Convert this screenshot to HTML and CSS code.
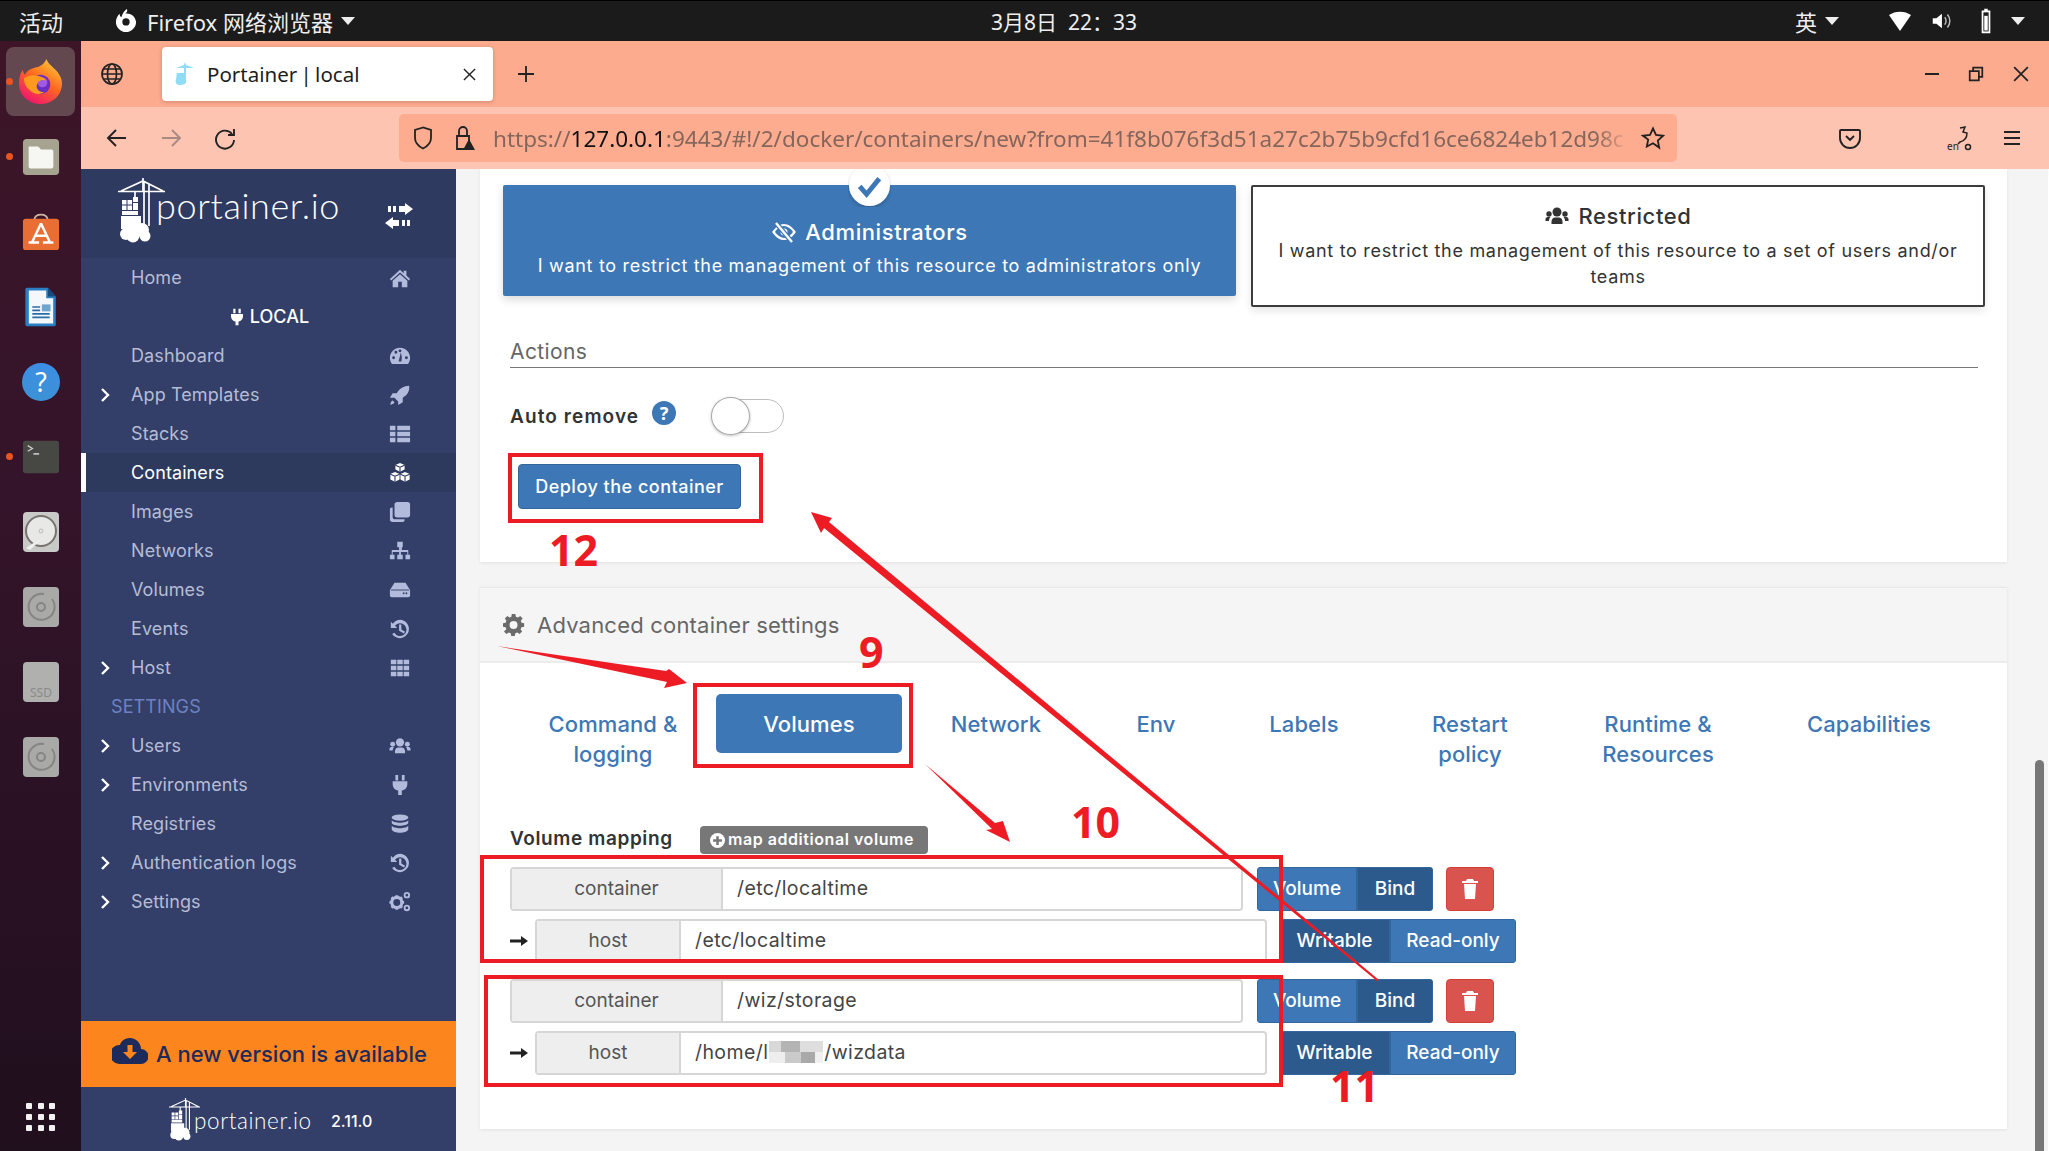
FILE: index.html
```html
<!DOCTYPE html>
<html lang="zh">
<head>
<meta charset="utf-8">
<title>Portainer | local</title>
<link rel="stylesheet" href="styles.css">
</head>
<body>
<svg class="defs" width="0" height="0" aria-hidden="true">
  <defs>
    <symbol id="i-home" viewBox="0 0 24 24"><path d="M12 3 1 13l1.400 1.600L12 6l9.600 8.600L23 13l-4-3.600V4h-3v2.700z"/><path d="M12 8 4 15v7h6v-6h4v6h6v-7z"/></symbol>
    <symbol id="i-plug" viewBox="0 0 24 24"><path d="M7 1h3v6H7zM14 1h3v6h-3zM4 8h16v3c0 4-2.500 6.500-6 7v5h-4v-5c-3.500-.5-6-3-6-7z"/></symbol>
    <symbol id="i-dash" viewBox="0 0 24 24"><path fill-rule="evenodd" d="M12 3C5.900 3 1 7.900 1 14c0 2.500.8 4.900 2.200 6.800h17.600C22.200 18.900 23 16.500 23 14c0-6.100-4.900-11-11-11zM5 15.500a1.600 1.600 0 1 1 0-3.200 1.600 1.600 0 0 1 0 3.200zm2.500-6a1.600 1.600 0 1 1 0-3.200 1.600 1.600 0 0 1 0 3.200zM12 8a1.600 1.600 0 1 1 0-3.200A1.600 1.600 0 0 1 12 8zm1.500 10h-3l1-4 1.500-6 1 6zM19 15.500a1.600 1.600 0 1 1 0-3.200 1.600 1.600 0 0 1 0 3.200z"/></symbol>
    <symbol id="i-rocket" viewBox="0 0 24 24"><path d="M22 2c-6 .3-10.500 3-13.500 8H4l-3 5h5l4 4v4l5-3v-5c5-3 7.700-7 7-13zM4 18c-2 1-2.500 3-2.500 4.500C3 22.500 5 22 6 20z"/></symbol>
    <symbol id="i-list" viewBox="0 0 24 24"><path d="M1 3h6v5H1zM9 3h14v5H9zM1 9.500h6v5H1zM9 9.500h14v5H9zM1 16h6v5H1zM9 16h14v5H9z"/></symbol>
    <symbol id="i-cubes" viewBox="0 0 24 24"><path d="m12 1 5 2.200v5L12 10.500 7 8.200v-5zM6.500 11l5 2.200v6l-5 2.300-5-2.300v-6zM17.500 11l5 2.200v6l-5 2.300-5-2.300v-6z"/><path fill="none" stroke="#2d3a5e" stroke-width="1.200" d="M7 3.500l5 2.200 5-2.200M12 5.700v4.800M1.500 13.300l5 2.200 5-2.200M6.500 15.500v6M12.500 13.300l5 2.200 5-2.200M17.500 15.500v6"/></symbol>
    <symbol id="i-clone" viewBox="0 0 24 24"><path d="M9 1h11a3 3 0 0 1 3 3v11a3 3 0 0 1-3 3H9a3 3 0 0 1-3-3V4a3 3 0 0 1 3-3z"/><path d="M4 7v11a2 2 0 0 0 2 2h11v1a2 2 0 0 1-2 2H4a3 3 0 0 1-3-3V9a2 2 0 0 1 2-2z"/></symbol>
    <symbol id="i-site" viewBox="0 0 24 24"><path d="M9 2h6v6h-1v3h7v5h2v5h-5v-5h2v-3h-7v3h2v5H9v-5h2v-3H4v3h2v5H1v-5h2v-5h8V8H9z"/></symbol>
    <symbol id="i-hdd" viewBox="0 0 24 24"><path fill-rule="evenodd" d="M6 4h12l5 8v6a2 2 0 0 1-2 2H3a2 2 0 0 1-2-2v-6zM17 15.500a1 1 0 1 0 0 .1zm3 0a1 1 0 1 0 0 .1z"/><path d="M2 12h20" stroke="#333f68" stroke-width="1"/></symbol>
    <symbol id="i-hist" viewBox="0 0 24 24"><path d="M12.500 2A10 10 0 0 0 4.300 6.300L2 4v7h7L6.500 8.500a7 7 0 1 1-.6 7.500l-2.500 1.500A10 10 0 1 0 12.500 2z"/><path d="M11 7h2.500v5.500l4 2.400-1.200 2L11 14z"/></symbol>
    <symbol id="i-grid" viewBox="0 0 24 24"><path d="M2 3h6v5H2zM9 3h6v5H9zM16 3h6v5h-6zM2 9.500h6v5H2zM9 9.500h6v5H9zM16 9.500h6v5h-6zM2 16h6v5H2zM9 16h6v5H9zM16 16h6v5h-6z"/></symbol>
    <symbol id="i-users" viewBox="0 0 24 24"><circle cx="12" cy="8" r="4.500"/><circle cx="4" cy="10" r="2.700"/><circle cx="20" cy="10" r="2.700"/><path d="M6.500 20v-2.500C6.500 15 8.500 13.500 10 13.500h4c1.500 0 3.500 1.500 3.500 4V20zM.5 17v-2c0-1 1-2 2-2h3c-1 1-1.500 2.500-1.500 4zM23.500 17v-2c0-1-1-2-2-2h-3c1 1 1.500 2.500 1.500 4z"/></symbol>
    <symbol id="i-db" viewBox="0 0 24 24"><ellipse cx="12" cy="5" rx="9" ry="3.500"/><path d="M3 7.500c1 2 5 3 9 3s8-1 9-3v3.500c-1 2-5 3-9 3s-8-1-9-3zM3 13.500c1 2 5 3 9 3s8-1 9-3V18c-1 2.500-5 3.500-9 3.500S4 20.500 3 18z"/></symbol>
    <symbol id="i-cogs" viewBox="0 0 24 24"><circle cx="8.500" cy="12.500" r="5.500" fill="none" stroke="#b3bbdd" stroke-width="3.400"/><path stroke="#b3bbdd" stroke-width="3" d="M8.500 4.500v3M8.500 17.500v3M.5 12.500h3M13.500 12.500h3M2.800 6.800l2.200 2.200M12 16l2.200 2.200M2.800 18.200 5 16M12 9l2.200-2.200"/><path fill-rule="evenodd" d="M19.500 1a3.500 3.500 0 1 1 0 7 3.500 3.500 0 0 1 0-7zm0 2a1.500 1.500 0 1 0 0 3 1.500 1.500 0 0 0 0-3zM19.500 15a3.500 3.500 0 1 1 0 7 3.500 3.500 0 0 1 0-7zm0 2a1.500 1.500 0 1 0 0 3 1.500 1.500 0 0 0 0-3z"/></symbol>
    <symbol id="i-chev" viewBox="0 0 12 16"><path d="M3 2l6 6-6 6" fill="none" stroke="#fff" stroke-width="2.400"/></symbol>
    <symbol id="i-logo" viewBox="0 0 47 65">
      <path d="M25 0v13M3 13 25 3l20 10M0 13.500h47M26 3v46M31 6v42M17 14v6" stroke="#fff" stroke-width="1.700" fill="none"/>
      <path d="M15 19h5v5h-5zM4 22h4.500v4.500H4zM9.500 22H14v4.500H9.500zM4 27.500h4.500V32H4zM9.500 27.500H14V32H9.500zM15 25h5v7h-5zM4 33h16v4H4z" fill="#fff"/>
      <path d="M3 38h20v8c0 3-5 5-10 5H3z" fill="#fff"/>
      <circle cx="8" cy="56" r="6" fill="#fff"/><circle cx="15" cy="50" r="7" fill="#fff"/><circle cx="24" cy="52" r="7" fill="#fff"/><circle cx="27" cy="58" r="5.500" fill="#fff"/><circle cx="15" cy="58" r="6.500" fill="#fff"/>
    </symbol>
  </defs>
</svg>

<header class="topbar">
  <span class="top-activities">活动</span>
  <span class="top-app">
    <svg class="top-ff" viewBox="0 0 24 26"><path fill="#fff" fill-rule="evenodd" d="M13 0c1 2 0 4-2 5 5-1 11 2 12 9 0 6-5 11-11 11S1 20 1 14c0-4 2-7 4-9 0 2 1 3 2 4 1-4 3-7 6-9zm-1 10a4 4 0 1 0 0 8 4 4 0 0 0 0-8z"/></svg>
    <span>Firefox 网络浏览器</span>
    <i class="caret"></i>
  </span>
  <span class="top-clock">3月8日&nbsp; 22：33</span>
  <span class="top-tray">
    <span class="tray-ime">英</span><i class="caret"></i>
    <svg class="tray-wifi" viewBox="0 0 24 24"><path fill="#fff" d="M1 6c6-4.500 16-4.500 22 0L12 22z"/></svg>
    <svg class="tray-vol" viewBox="0 0 24 24"><path fill="#fff" d="M3 9h4l6-5v16l-6-5H3z"/><path d="M16 8c2 2 2 6 0 8M19 5c3.500 4 3.500 10 0 14" stroke="#bbb" stroke-width="1.600" fill="none"/></svg>
    <svg class="tray-bat" viewBox="0 0 16 30"><path fill="#fff" d="M6 1h4v2h3v26H3V3h3z"/><path fill="#1a1a1a" d="M5 5h6v22H5z"/><path fill="#fff" d="M6 9h4v17H6z"/></svg>
    <svg class="tray-caret" viewBox="0 0 14 8"><path fill="#eee" d="M0 0h14L7 8z"/></svg>
  </span>
</header>

<div class="desktop">
  <nav class="dock">
    <div class="dock-item is-active is-running">
      <svg class="dock-ff" viewBox="0 0 44 46">
        <defs>
          <linearGradient id="ffg" x1="0.900" y1="0" x2="0.300" y2="1"><stop offset="0" stop-color="#ffd53a"/><stop offset=".5" stop-color="#ff6a1f"/><stop offset="1" stop-color="#f0146e"/></linearGradient>
        </defs>
        <path fill="url(#ffg)" d="M28 0c1 3 3 5 6 8 6 5 10 11 10 17 0 12-10 21-22 21S0 37 0 25c0-5 1-10 4-14 0 2 1 4 2 5 2-4 6-6 10-7 6-1 10-4 12-9z"/>
        <circle cx="22" cy="26" r="10" fill="#6a2fc2"/>
        <circle cx="24" cy="24" r="5" fill="#a15ae0"/>
        <path fill="#ff9a1f" d="M5 20c4-3 9-4 14-3 4 1 7 2 9 5-3-1-6-1-8 1-1 2-3 4-1 8 1 2 4 3 7 3-5 3-11 2-15-2-4-3-6-8-6-12z"/>
      </svg>
    </div>
    <div class="dock-item is-running">
      <svg class="dock-ico" viewBox="0 0 40 40"><rect x="1" y="1" width="38" height="38" rx="4" fill="#a7a391"/><path d="M7 9h10l3 3h11a2 2 0 0 1 2 2v16a2 2 0 0 1-2 2H9a2 2 0 0 1-2-2z" fill="#f6f6f2"/></svg>
    </div>
    <div class="dock-item">
      <svg class="dock-ico" viewBox="0 0 40 40"><path d="M13 7c1-7 13-7 14 0" fill="none" stroke="#cdb6a2" stroke-width="2"/><rect x="1" y="6" width="38" height="33" rx="3" fill="#e96e34"/><path d="M20 11 11 30M20 11l9 19M14 24h12M7 31h11M22 31h11" stroke="#fff" stroke-width="2.600" fill="none"/></svg>
    </div>
    <div class="dock-item">
      <svg class="dock-ico" viewBox="0 0 40 46"><path d="M4 1h24l9 10v32a2 2 0 0 1-2 2H4a2 2 0 0 1-2-2V3a2 2 0 0 1 2-2z" fill="#2a7fc4"/><path d="M6 4h20v9h8v29H6z" fill="#f4f8fb"/><path d="M28 1l9 10h-9z" fill="#164b80"/><path d="M10 22h9v2h-9zM10 26h9v2h-9zM10 30h20v2H10zM10 34h20v2H10z" fill="#2a6ca6"/><rect x="21" y="20" width="10" height="8" fill="#6ea6cf"/></svg>
    </div>
    <div class="dock-item">
      <svg class="dock-ico" viewBox="0 0 40 40"><defs><linearGradient id="hlp" x1="0" y1="0" x2="0" y2="1"><stop offset="0" stop-color="#3c8ee4"/><stop offset="1" stop-color="#3c92d4"/></linearGradient></defs><circle cx="20" cy="20" r="20" fill="url(#hlp)"/><text x="20" y="30" text-anchor="middle" class="dock-q">?</text></svg>
    </div>
    <div class="dock-item is-running">
      <svg class="dock-ico" viewBox="0 0 40 36"><rect x="1" y="1" width="38" height="34" rx="3" fill="#474744"/><path d="M6 6l5 3-5 3" fill="none" stroke="#ccc" stroke-width="1.400"/><path d="M12 14h6v1.500h-6z" fill="#ddd"/></svg>
    </div>
    <div class="dock-item">
      <svg class="dock-ico" viewBox="0 0 36 40"><rect width="36" height="40" rx="4" fill="#c9c9c7"/><circle cx="18" cy="19" r="15" fill="#e8e8e6" stroke="#77736f" stroke-width="2"/><circle cx="18" cy="19" r="2" fill="none" stroke="#bbb"/><path d="M3 36l12-8h3L7 38z" fill="#eee"/></svg>
    </div>
    <div class="dock-item">
      <svg class="dock-ico" viewBox="0 0 36 40"><rect width="36" height="40" rx="4" fill="#a9a9a7"/><path d="M21 7a13 13 0 1 0 8 5" fill="none" stroke="#858583" stroke-width="2"/><circle cx="18" cy="20" r="4" fill="none" stroke="#858583" stroke-width="2"/></svg>
    </div>
    <div class="dock-item">
      <svg class="dock-ico" viewBox="0 0 36 40"><rect width="36" height="40" rx="4" fill="#b0b0ae"/><text x="18" y="35" text-anchor="middle" class="dock-ssd">SSD</text></svg>
    </div>
    <div class="dock-item">
      <svg class="dock-ico" viewBox="0 0 36 40"><rect width="36" height="40" rx="4" fill="#a9a9a7"/><path d="M21 7a13 13 0 1 0 8 5" fill="none" stroke="#858583" stroke-width="2"/><circle cx="18" cy="20" r="4" fill="none" stroke="#858583" stroke-width="2"/></svg>
    </div>
    <div class="dock-apps"><i></i><i></i><i></i><i></i><i></i><i></i><i></i><i></i><i></i></div>
  </nav>

  <div class="window">
    <div class="tabstrip">
      <svg class="ff-globe" viewBox="0 0 24 24"><circle cx="12" cy="12" r="10"/><ellipse cx="12" cy="12" rx="4.500" ry="10"/><path d="M2 12h20M3.500 7h17M3.500 17h17"/></svg>
      <div class="tab">
        <svg class="tab-fav" viewBox="0 0 20 24"><path fill="#8fdcf5" d="M10 0l1 3 8 3H11v14c0 2-3 3-6 3-4 0-5-3-4-6 1-2 0-4 1-6h7V6H1l8-3z"/></svg>
        <span class="tab-title">Portainer | local</span>
        <svg class="tab-close" viewBox="0 0 14 14"><path d="M1 1l12 12M13 1L1 13"/></svg>
      </div>
      <svg class="tab-new" viewBox="0 0 20 20"><path d="M10 2v16M2 10h16"/></svg>
      <div class="win-ctrls">
        <span class="win-min"></span>
        <svg class="win-max" viewBox="0 0 14 14"><path d="M1.500 4.500h8v8h-8zM4.500 4.500v-3h8v8h-3"/></svg>
        <svg class="win-x" viewBox="0 0 14 14"><path d="M1 1l12 12M13 1L1 13"/></svg>
      </div>
    </div>

    <div class="navbar">
      <svg class="nb-ico nb-back" viewBox="0 0 24 24"><path d="M21 12H3M11 4l-8 8 8 8"/></svg>
      <svg class="nb-ico nb-fwd" viewBox="0 0 24 24"><path d="M3 12h18M13 4l8 8-8 8"/></svg>
      <svg class="nb-ico nb-reload" viewBox="0 0 24 24"><path d="M19 8a9 9 0 1 0 2 6M21 3v6h-6"/></svg>
      <div class="urlbar">
        <svg class="url-shield" viewBox="0 0 20 24"><path d="M10 1.500 2 4v8c0 5 4 8.500 8 10.500 4-2 8-5.500 8-10.500V4z"/></svg>
        <svg class="url-lock" viewBox="0 0 24 26"><path d="M5 11h12v13H5zM7 11V6a4 4 0 0 1 8 0v5"/><path class="url-warn" d="M17 14l6 11H11z"/></svg>
        <span class="url-text"><span class="url-dim">https://</span><b class="url-host">127.0.0.1</b><span class="url-dim">:9443/#!/2/docker/containers/new?from=41f8b076f3d51a27c2b75b9cfd16ce6824eb12d98c</span></span>
        <svg class="url-star" viewBox="0 0 24 24"><path d="M12 2.500l3 6.500 7 .8-5.200 4.800 1.400 7L12 17.200l-6.200 3.400 1.400-7L2 9.800 9 9z"/></svg>
      </div>
      <svg class="nb-ico nb-pocket" viewBox="0 0 24 24"><path d="M3 4h18a1 1 0 0 1 1 1v7a10 10 0 0 1-20 0V5a1 1 0 0 1 1-1zM8 10l4 4 4-4"/></svg>
      <svg class="nb-ico nb-ext" viewBox="0 0 26 26"><path d="M14 3l5-1-2 5 4 1c0 5-3 8-7 9l-2 2"/><text x="1" y="25" class="nb-en">en</text><circle cx="22" cy="22" r="2.500"/></svg>
      <svg class="nb-ico nb-menu" viewBox="0 0 24 24"><path d="M4 6h16M4 12h16M4 18h16"/></svg>
    </div>

    <div class="app">
      <aside class="sidebar">
        <div class="side-head">
          <svg class="side-logo"><use href="#i-logo"/></svg>
          <span class="side-brand">portainer.io</span>
          <svg class="side-swap" viewBox="0 0 28 26"><path fill="#fff" d="M14 3h6V0l8 6-8 6V9h-6zM8 3h3v6H8zM3 3h3v6H3zM14 23H8v3l-8-6 8-6v3h6zM20 17h-3v6h3zM25 17h-3v6h3z"/></svg>
        </div>
        <ul class="side-nav">
          <li class="side-row"><span class="side-gut"></span><span class="side-lbl">Home</span><svg class="side-ico"><use href="#i-home"/></svg></li>
          <li class="side-row side-env"><svg class="env-plug"><use href="#i-plug"/></svg>LOCAL</li>
          <li class="side-row"><span class="side-gut"></span><span class="side-lbl">Dashboard</span><svg class="side-ico"><use href="#i-dash"/></svg></li>
          <li class="side-row"><span class="side-gut"><svg class="chev"><use href="#i-chev"/></svg></span><span class="side-lbl">App Templates</span><svg class="side-ico"><use href="#i-rocket"/></svg></li>
          <li class="side-row"><span class="side-gut"></span><span class="side-lbl">Stacks</span><svg class="side-ico"><use href="#i-list"/></svg></li>
          <li class="side-row is-current"><span class="side-gut"></span><span class="side-lbl">Containers</span><svg class="side-ico"><use href="#i-cubes"/></svg></li>
          <li class="side-row"><span class="side-gut"></span><span class="side-lbl">Images</span><svg class="side-ico"><use href="#i-clone"/></svg></li>
          <li class="side-row"><span class="side-gut"></span><span class="side-lbl">Networks</span><svg class="side-ico"><use href="#i-site"/></svg></li>
          <li class="side-row"><span class="side-gut"></span><span class="side-lbl">Volumes</span><svg class="side-ico"><use href="#i-hdd"/></svg></li>
          <li class="side-row"><span class="side-gut"></span><span class="side-lbl">Events</span><svg class="side-ico"><use href="#i-hist"/></svg></li>
          <li class="side-row"><span class="side-gut"><svg class="chev"><use href="#i-chev"/></svg></span><span class="side-lbl">Host</span><svg class="side-ico"><use href="#i-grid"/></svg></li>
          <li class="side-row side-title">SETTINGS</li>
          <li class="side-row"><span class="side-gut"><svg class="chev"><use href="#i-chev"/></svg></span><span class="side-lbl">Users</span><svg class="side-ico"><use href="#i-users"/></svg></li>
          <li class="side-row"><span class="side-gut"><svg class="chev"><use href="#i-chev"/></svg></span><span class="side-lbl">Environments</span><svg class="side-ico"><use href="#i-plug"/></svg></li>
          <li class="side-row"><span class="side-gut"></span><span class="side-lbl">Registries</span><svg class="side-ico"><use href="#i-db"/></svg></li>
          <li class="side-row"><span class="side-gut"><svg class="chev"><use href="#i-chev"/></svg></span><span class="side-lbl">Authentication logs</span><svg class="side-ico"><use href="#i-hist"/></svg></li>
          <li class="side-row"><span class="side-gut"><svg class="chev"><use href="#i-chev"/></svg></span><span class="side-lbl">Settings</span><svg class="side-ico"><use href="#i-cogs"/></svg></li>
        </ul>
        <div class="side-update">
          <svg class="update-ico" viewBox="0 0 36 26"><path fill="#1d2a5c" d="M29 11C29 5 24 0 18 0c-5 0-9 3-10 7a9.500 9.500 0 0 0-1 19h22a7.500 7.500 0 0 0 0-15z"/><path fill="#fc851e" d="M15.500 7h5v7h4.500L18 21l-7-7h4.500z"/></svg>
          A new version is available
        </div>
        <div class="side-foot">
          <svg class="foot-logo"><use href="#i-logo"/></svg>
          <span class="foot-brand">portainer.io</span>
          <span class="foot-ver">2.11.0</span>
        </div>
      </aside>

      <main class="content">
        <section class="card card-top">
          <div class="access-row">
            <div class="access access-on">
              <h3 class="access-title">
                <svg class="access-ico" viewBox="0 0 24 24"><path fill="none" stroke="#fff" stroke-width="2.200" d="M1.500 12C5 7 8.500 5 12 5s7 2 10.500 7C19 17 15.500 19 12 19S5 17 1.500 12z"/><circle cx="12" cy="12" r="3.500" fill="#fff"/><path stroke="#3e77b5" stroke-width="5" d="M4 3l16 19"/><path stroke="#fff" stroke-width="2.400" d="M4 3l16 19"/></svg>
                Administrators
              </h3>
              <p class="access-desc">I want to restrict the management of this resource to administrators only</p>
            </div>
            <div class="access access-off">
              <h3 class="access-title"><svg class="access-ico"><use href="#i-users"/></svg>Restricted</h3>
              <p class="access-desc">I want to restrict the management of this resource to a set of users and/or teams</p>
            </div>
          </div>
          <h4 class="sec-head">Actions</h4>
          <div class="auto-row">
            <span class="auto-lbl">Auto remove</span>
            <svg class="auto-help" viewBox="0 0 24 24"><circle cx="12" cy="12" r="12" fill="#3e77b5"/><text x="12" y="19" text-anchor="middle" class="auto-q">?</text></svg>
            <span class="toggle"><i class="toggle-knob"></i></span>
          </div>
          <button class="btn-deploy" type="button">Deploy the container</button>
        </section>

        <section class="card card-adv">
          <header class="adv-head">
            <svg class="adv-gear" viewBox="0 0 24 24"><path fill="#6b6b6b" fill-rule="evenodd" d="M10 1h4l.6 3 2.400 1 2.600-1.700 2.800 2.800L20.200 8.700 21 11l3 .6v3.800l-3 .6-1 2.400 1.700 2.600-2.800 2.800-2.600-1.700-2.300.9-.6 3h-4l-.6-3-2.300-.9-2.600 1.700-2.800-2.800L3.800 18.400 3 16l-3-.6v-3.800l3-.6.800-2.300L2.100 6.100l2.800-2.800L7.500 5l2-1zM12 9a4.500 4.500 0 1 0 0 9 4.500 4.500 0 0 0 0-9z" transform="scale(.96) translate(0 -1)"/></svg>
            Advanced container settings
          </header>
          <div class="tabs">
            <a class="tab-link">Command &amp;<br>logging</a>
            <a class="tab-link is-on">Volumes</a>
            <a class="tab-link">Network</a>
            <a class="tab-link">Env</a>
            <a class="tab-link">Labels</a>
            <a class="tab-link">Restart<br>policy</a>
            <a class="tab-link">Runtime &amp;<br>Resources</a>
            <a class="tab-link">Capabilities</a>
          </div>
          <div class="vol-head">
            <span class="vol-title">Volume mapping</span>
            <span class="vol-add"><svg class="vol-plus" viewBox="0 0 24 24"><circle cx="12" cy="12" r="12" fill="#fff"/><path d="M10 5h4v5h5v4h-5v5h-4v-5H5v-4h5z" fill="#777"/></svg>map additional volume</span>
          </div>

          <div class="vol-group">
            <div class="vol-row">
              <div class="ig ig-cont"><span class="ig-addon ig-addon-cont">container</span><span class="ig-input">/etc/localtime</span></div>
              <div class="btns btns-type"><span class="b b-vol">Volume</span><span class="b b-bind b-dark">Bind</span></div>
              <span class="b-trash"><svg viewBox="0 0 16 20"><path fill="#fff" d="M5 0h6l1 2h4v2H0V2h4zM2 5h12l-1 15H3z"/></svg></span>
            </div>
            <div class="vol-row">
              <svg class="vol-arrow" viewBox="0 0 18 12"><path fill="#222" d="M0 4.500h11V1l7 5-7 5V7.500H0z"/></svg>
              <div class="ig ig-host"><span class="ig-addon ig-addon-host">host</span><span class="ig-input ig-input-host">/etc/localtime</span></div>
              <div class="btns btns-mode"><span class="b b-write b-dark">Writable</span><span class="b b-read">Read-only</span></div>
            </div>
          </div>

          <div class="vol-group">
            <div class="vol-row">
              <div class="ig ig-cont"><span class="ig-addon ig-addon-cont">container</span><span class="ig-input">/wiz/storage</span></div>
              <div class="btns btns-type"><span class="b b-vol">Volume</span><span class="b b-bind b-dark">Bind</span></div>
              <span class="b-trash"><svg viewBox="0 0 16 20"><path fill="#fff" d="M5 0h6l1 2h4v2H0V2h4zM2 5h12l-1 15H3z"/></svg></span>
            </div>
            <div class="vol-row">
              <svg class="vol-arrow" viewBox="0 0 18 12"><path fill="#222" d="M0 4.500h11V1l7 5-7 5V7.500H0z"/></svg>
              <div class="ig ig-host"><span class="ig-addon ig-addon-host">host</span><span class="ig-input ig-input-host">/home/l<i class="mosaic"></i>/wizdata</span></div>
              <div class="btns btns-mode"><span class="b b-write b-dark">Writable</span><span class="b b-read">Read-only</span></div>
            </div>
          </div>
        </section>
        <span class="scroll-thumb"></span>
      </main>
    </div>
  </div>
</div>

<svg class="access-check" viewBox="0 0 44 44"><circle cx="22" cy="22" r="21" fill="#fff"/><path d="M12 23l7 8 13-16" fill="none" stroke="#3e77b5" stroke-width="5"/></svg>

<div class="mark mark-deploy"></div>
<div class="mark mark-vols"></div>
<div class="mark mark-row1"></div>
<div class="mark mark-row2"></div>
<svg class="arrows" viewBox="0 0 2049 1151">
  <polygon points="811,512 832,518 829,522 1379,980 1377,981 824,528 821,533"/>
  <polygon points="497,646 666,671 669,669 687,683 664,688 667,682"/>
  <polygon points="925,764 995,823 1003,821 1010,842 986,830 992,829"/>
</svg>
<span class="num num-12">12</span>
<span class="num num-9">9</span>
<span class="num num-10">10</span>
<span class="num num-11">11</span>
</body>
</html>
```

FILE: styles.css
```css
* { box-sizing: border-box; }
html, body { margin: 0; padding: 0; }
body {
  width: 2049px; height: 1151px; overflow: hidden; position: relative;
  font-family: "Inter", "Noto Sans", "Noto Sans CJK SC", sans-serif;
  font-size: 18px; color: #333; background: #f4f4f4;
  display: flex; flex-direction: column;
}
.defs { position: absolute; }
ul { list-style: none; margin: 0; padding: 0; }
h3, h4, p { margin: 0; }
svg { display: block; flex: none; }

/* Ubuntu top bar */
.topbar {
  height: 41px; flex: none; background: #1b1b1b; border-top: 1px solid #000; color: #eee;
  display: flex; align-items: center;
  font-family: "Noto Sans", "Noto Sans CJK SC", sans-serif; font-size: 22px;
}
.top-activities { margin-left: 19px; width: 96px; font-family: "Noto Sans CJK SC", sans-serif; }
.top-app { display: flex; align-items: center; width: 876px; }
.top-ff { width: 22px; height: 24px; margin-right: 10px; }
.caret { display: block; flex: none; width: 14px; height: 8px; border: 7px solid transparent; border-top: 8px solid #eee; border-bottom: 0; margin-left: 8px; }
.top-clock { width: 804px; font-size: 21px; }
.top-tray { display: flex; align-items: center; flex: none; }
.tray-ime { font-family: "Noto Sans CJK SC", sans-serif; font-size: 22px; }
.tray-wifi { width: 24px; height: 24px; margin-left: 49px; }
.tray-vol { width: 22px; height: 22px; margin-left: 18px; }
.tray-bat { width: 16px; height: 26px; margin-left: 26px; }
.tray-caret { width: 14px; height: 8px; margin-left: 17px; }

.desktop { flex: 1; display: flex; min-height: 0; }

/* Dock */
.dock {
  width: 81px; flex: none; display: flex; flex-direction: column; padding-top: 3px;
  background: linear-gradient(#3d1527, #34142a 40%, #200f1d);
}
.dock-item { height: 75px; display: flex; align-items: center; justify-content: center; position: relative; }
.dock-item.is-active::before {
  content: ""; position: absolute; left: 6px; right: 6px; top: 3px; bottom: 3px; border-radius: 8px; background: #64484f;
}
.dock-item.is-running::after {
  content: ""; position: absolute; left: 6px; top: 34px; width: 7px; height: 7px; border-radius: 50%; background: #e95420;
}
.dock-ff { width: 43px; height: 45px; position: relative; }
.dock-ico { width: 38px; height: 40px; }
.dock-q { font: 400 28px "Noto Sans", sans-serif; fill: #fff; }
.dock-ssd { font: 400 12px "Noto Sans", sans-serif; fill: #8b8b89; }
.dock-apps {
  margin-top: auto; margin-bottom: 20px; align-self: center;
  display: grid; grid-template-columns: repeat(3, 6px); gap: 5px 5.500px;
}
.dock-apps i { width: 6px; height: 6px; background: #f2f2f2; border-radius: 1px; }

/* Firefox chrome */
.window { flex: 1; min-width: 0; display: flex; flex-direction: column; }
.tabstrip { height: 66px; flex: none; background: #fdab8f; display: flex; align-items: center; position: relative; }
.ff-globe { width: 24px; height: 24px; margin-left: 19px; fill: none; stroke: #222; stroke-width: 1.700; }
.tab {
  width: 331px; height: 54px; margin-left: 38px; background: #fff; border-radius: 4px; box-shadow: 0 1px 4px rgba(0,0,0,.2);
  display: flex; align-items: center; padding-left: 13px;
}
.tab-fav { width: 20px; height: 24px; }
.tab-title { font: 400 20.500px "Noto Sans", sans-serif; color: #1d1d1d; margin-left: 12px; width: 256px; word-spacing: -2px; }
.tab-close { width: 13px; height: 13px; fill: none; stroke: #222; stroke-width: 1.500; }
.tab-new { width: 20px; height: 20px; margin-left: 23px; fill: none; stroke: #222; stroke-width: 1.800; }
.win-ctrls { margin-left: auto; display: flex; align-items: center; padding-right: 20px; gap: 29px; }
.win-min { width: 14px; height: 2px; background: #222; }
.win-max, .win-x { width: 16px; height: 16px; fill: none; stroke: #222; stroke-width: 1.500; }

.navbar { height: 62px; flex: none; background: #fdc4b1; display: flex; align-items: center; position: relative; }
.nb-ico { width: 24px; height: 24px; fill: none; stroke: #222; stroke-width: 1.900; }
.nb-back { margin-left: 24px; }
.nb-fwd { margin-left: 30px; stroke: #a88a80; }
.nb-reload { margin-left: 30px; }
.urlbar {
  width: 1278px; height: 48px; margin-left: 162px; background: #fdac90; border-radius: 5px; flex: none;
  display: flex; align-items: center;
}
.url-shield { width: 20px; height: 24px; margin-left: 14px; fill: none; stroke: #222; stroke-width: 1.800; }
.url-lock { width: 24px; height: 26px; margin-left: 19px; fill: none; stroke: #222; stroke-width: 1.800; }
.url-warn { fill: #222; stroke: none; }
.url-text {
  width: 1137px; margin-left: 17px; white-space: nowrap; overflow: hidden; flex: none;
  font: 400 22.500px "Noto Sans", sans-serif;
  -webkit-mask-image: linear-gradient(90deg, #000 97%, transparent);
  mask-image: linear-gradient(90deg, #000 97%, transparent);
}
.url-dim { color: #84665c; }
.url-host { font-weight: 400; color: #111; }
.url-star { width: 24px; height: 24px; margin-left: 11px; fill: none; stroke: #222; stroke-width: 1.800; }
.nb-pocket { margin-left: 161px; }
.nb-ext { width: 26px; height: 26px; margin-left: 84px; stroke-width: 1.500; }
.nb-en { font: 400 10px "Noto Sans", sans-serif; fill: #222; stroke: none; }
.nb-menu { margin-left: 28px; }

/* App */
.app { flex: 1; min-height: 0; display: flex; }
.sidebar { width: 375px; flex: none; background: #333f68; display: flex; flex-direction: column; }
.side-head { height: 89px; flex: none; background: #2e3a60; display: flex; align-items: flex-start; position: relative; }
.side-logo { width: 47px; height: 65px; margin: 9px 0 0 37px; }
.side-brand { font: 300 36px "Lato", sans-serif; color: #fff; margin: 14px 0 0 -9px; width: 226px; letter-spacing: .6px; }
.side-swap { width: 28px; height: 26px; margin-top: 34px; margin-left: 3px; }
.side-nav { flex: 1; }
.side-row { height: 39px; display: flex; align-items: center; color: #b6bcd6; font-size: 18px; letter-spacing: .1px; position: relative; }
.side-gut { width: 50px; display: flex; justify-content: center; padding-right: 2px; }
.side-lbl { flex: 1; }
.chev { width: 12px; height: 16px; }
.side-ico { width: 22px; height: 22px; margin-right: 45px; fill: #b3bbdd; }
.side-env { justify-content: center; color: #fff; font-weight: 500; }
.env-plug { width: 18px; height: 18px; fill: #fff; margin-right: 4px; }
.side-title { padding-left: 30px; color: #6e82c2; }
.is-current { background: #2d3a5e; color: #fff; box-shadow: inset 5px 0 0 #fff; }
.is-current .side-ico { fill: #fff; }
.side-update {
  height: 66px; flex: none; background: #fc851e; color: #1d2a5c; display: flex; align-items: center;
  padding-left: 31px; font-size: 22px; font-weight: 500;
}
.update-ico { width: 36px; height: 26px; margin-right: 8px; margin-top: -6px; }
.side-foot { height: 64px; flex: none; display: flex; align-items: center; padding-top: 3px; }
.foot-logo { width: 31px; height: 43px; margin-left: 88px; margin-top: -3px; }
.foot-brand { font: 300 22.500px "Lato", sans-serif; color: #fff; margin-left: -6px; width: 137px; letter-spacing: .6px; }
.foot-ver { font-size: 16px; color: #fff; font-weight: 500; }

/* Content */
.content { flex: 1; min-width: 0; padding-left: 24px; position: relative; overflow: hidden; border-right: 1px solid #fff; }
.card { width: 1527px; background: #fff; box-shadow: 0 1px 3px rgba(0,0,0,.08); }
.card-top { padding: 16px 0 53px; height: 393px; }
.access-row { display: flex; align-items: flex-start; gap: 15px; margin-left: 23px; }
.access { text-align: center; border-radius: 2px; }
.access-on { width: 733px; height: 111px; background: #3e77b5; color: #fff; padding-top: 34px; box-shadow: 0 4px 8px rgba(0,0,0,.14); }
.access-off { width: 734px; height: 122px; background: #fff; border: 2px solid #3c3c3c; padding: 16px 20px 0; box-shadow: 0 4px 8px rgba(0,0,0,.1); }
.access-title { display: flex; align-items: center; justify-content: center; font-size: 22px; font-weight: 500; height: 26px; letter-spacing: .6px; }
.access-ico { width: 26px; height: 24px; margin-right: 8px; fill: #333; }
.access-desc { font-size: 18px; line-height: 26px; margin-top: 8px; letter-spacing: .69px; }
.access-off .access-desc { margin-top: 9px; }
.sec-head {
  margin: 33px 29px 0 30px; height: 28px; border-bottom: 1.500px solid #777; font-size: 21px; font-weight: 400; color: #666; line-height: 24px; letter-spacing: .4px;
}
.auto-row { margin: 29px 0 0 30px; height: 38px; display: flex; align-items: center; }
.auto-lbl { font-size: 19px; font-weight: 600; color: #333; width: 142px; letter-spacing: 1.100px; white-space: nowrap; }
.auto-help { width: 24px; height: 24px; margin-top: -6px; }
.auto-q { font: 700 18px "Noto Sans", sans-serif; fill: #fff; }
.toggle { width: 73px; height: 38px; margin-left: 35px; position: relative; display: block; }
.toggle::before { content: ""; position: absolute; left: 4px; right: 0; top: 2px; bottom: 2px; border-radius: 17px; border: 1.500px solid #bdbdbd; background: #fff; }
.toggle-knob { position: absolute; left: 0; top: 0; width: 39px; height: 38px; border-radius: 50%; background: #fff; border: 1.500px solid #a9a9a9; box-shadow: 0 1px 3px rgba(0,0,0,.25); }
.btn-deploy {
  display: block; margin: 29px 0 0 38px; width: 223px; height: 45px; background: #3e77b5; color: #fff;
  border: 1px solid #336699; border-radius: 4px; font: 500 18px "Inter", sans-serif; letter-spacing: .5px; padding: 0;
}
.card-adv { margin-top: 25px; height: 542px; }
.adv-head {
  height: 76px; background: #f5f5f5; border-top: 1px solid #e8e8e8; border-bottom: 2px solid #ececec;
  display: flex; align-items: center; padding-left: 23px; font-size: 22px; color: #666; letter-spacing: .2px;
}
.adv-gear { width: 22px; height: 22px; margin-right: 12px; }
.tabs {
  display: grid; margin: 31px 0 0 30px; align-items: start;
  grid-template-columns: 206px 186px 188px 132px 164px 168px 208px 214px;
}
.tab-link { display: block; text-align: center; color: #3e77b5; font-size: 22px; line-height: 30px; padding: 14.500px 0; font-weight: 500; letter-spacing: .1px; }
.tab-link.is-on { background: #3e77b5; color: #fff; border-radius: 5px; }
.vol-head { display: flex; align-items: center; height: 28px; margin: 43px 0 0 30px; }
.vol-title { width: 190px; font-size: 19px; font-weight: 600; color: #333; letter-spacing: .6px; white-space: nowrap; margin-top: -4px; }
.vol-add {
  width: 228px; height: 28px; background: #777; color: #fff; border-radius: 4px; font-size: 16px; font-weight: 600; letter-spacing: .55px; white-space: nowrap;
  display: flex; align-items: center; padding: 0 0 2px 10px;
}
.vol-plus { width: 15px; height: 15px; margin-right: 3px; margin-top: 2px; }
.vol-group { margin: 13px 0 0 30px; display: flex; flex-direction: column; gap: 8px; }
.vol-group + .vol-group { margin-top: 16px; }
.vol-row { display: flex; align-items: center; height: 44px; }
.vol-arrow { width: 18px; height: 12px; margin-right: 7px; }
.ig { height: 44px; display: flex; border: 2px solid #d6d6d6; border-radius: 4px; background: #fff; flex: none; }
.ig-cont { width: 733px; }
.ig-host { width: 732px; }
.ig-addon { background: #eee; color: #555; display: flex; align-items: center; justify-content: center; font-size: 19px; border-right: 2px solid #d6d6d6; padding-bottom: 2px; }
.ig-addon-cont { width: 211px; }
.ig-addon-host { width: 144px; }
.ig-input { padding: 0 0 2px 14px; font-size: 19.500px; letter-spacing: .4px; color: #444; display: flex; align-items: center; }
.mosaic {
  width: 54px; height: 22px; margin: 0 1px; display: block;
  background:
    linear-gradient(90deg, #d8d8d8 0 22%, #b4b4b4 22% 58%, #dedede 58% 100%) 0 0 / 100% 50% no-repeat,
    linear-gradient(90deg, #eee 0 30%, #cacaca 30% 60%, #a9a9a9 60% 85%, #f0f0f0 85%) 0 100% / 100% 50% no-repeat;
}
.btns { display: flex; height: 44px; flex: none; border-radius: 4px; overflow: hidden; color: #fff; font-size: 19px; font-weight: 500; }
.btns-type { width: 176px; margin-left: 14px; }
.btns-mode { width: 237px; margin-left: 12px; }
.b { display: flex; align-items: center; justify-content: center; background: #3e77b5; border: 1px solid #336699; padding-bottom: 2px; }
.b-dark { background: #2d5a8d; }
.b-vol { width: 100px; }
.b-bind { width: 76px; }
.b-write { width: 111px; }
.b-read { width: 126px; }
.b-trash { width: 48px; height: 44px; margin-left: 13px; background: #d9534f; border: 1px solid #d43f3a; border-radius: 4px; display: flex; align-items: center; justify-content: center; }
.b-trash svg { width: 16px; height: 20px; }
.scroll-thumb { position: absolute; left: 1579px; top: 591px; width: 9px; height: 400px; background: #777; border-radius: 4.500px; }

/* Annotations laid over the screenshot */
.access-check { position: absolute; left: 848px; top: 164px; width: 43px; height: 43px; clip-path: inset(5px 0 0 0); filter: drop-shadow(0 2px 2px rgba(0,0,0,.2)); }
.mark { position: absolute; border: 4px solid #ed1c24; }
.mark-deploy { left: 508px; top: 453px; width: 255px; height: 70px; }
.mark-vols { left: 693px; top: 683px; width: 220px; height: 85px; }
.mark-row1 { left: 480px; top: 855px; width: 803px; height: 108px; }
.mark-row2 { left: 484px; top: 975px; width: 799px; height: 112px; }
.arrows { position: absolute; left: 0; top: 0; width: 2049px; height: 1151px; fill: #ed1c24; pointer-events: none; }
.num { position: absolute; color: #ed1c24; font: 700 43px/1 "Noto Sans", sans-serif; }
.num-12 { left: 549px; top: 528px; }
.num-9 { left: 859px; top: 630px; }
.num-10 { left: 1071px; top: 800px; }
.num-11 { left: 1330px; top: 1064px; }
```
